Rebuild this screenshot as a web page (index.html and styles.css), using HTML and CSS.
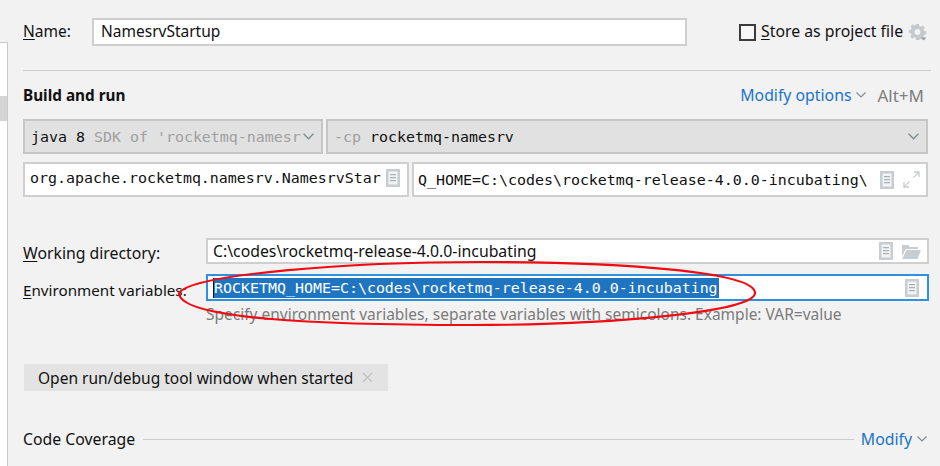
FILE: index.html
```html
<!DOCTYPE html>
<html lang="en-us">
  <head>
    <meta charset="utf-8">
    <title>Run Configuration</title>
    <link rel="stylesheet" href="styles.css">
  </head>
  <body>
    <svg class="defs" width="0" height="0">
      <symbol id="doc" viewBox="0 0 14 18">
        <path fill="#c8cdd1" d="M0 0h14v18H0z"/>
        <path fill="#f1f3f4" d="M2.500 2.500h9v13h-9z"/>
        <path fill="#a9b0b6" d="M4 5h6v1.200H4zM4 8h6v1.200H4zM4 11h6v1.200H4z"/>
      </symbol>
      <symbol id="chev" viewBox="0 0 10 6">
        <path fill="none" stroke="#7f8b91" stroke-width="1.200" d="M.5.5 5 5 9.500.5"/>
      </symbol>
    </svg>

    <!-- Config list on the left -->
    <div class="sidebar"><div class="sidebar-sel"></div></div>

    <div class="main">
      <!-- Name row -->
      <div class="name-row">
        <label class="name-label"><u>N</u>ame:</label>
        <div class="field name-field">NamesrvStartup</div>
        <span class="check"></span>
        <span class="store"><u>S</u>tore as project file</span>
        <svg class="gear" width="18" height="18" viewBox="0 0 18 18">
          <path fill="#c4c9cd" fill-rule="evenodd" d="M7 1h3l.4 2.200 1.500.6L13.800 2.500l2 2-1.300 1.900.6 1.500 2.200.4v3l-2.200.4-.6 1.500 1.300 1.900-2 2-1.900-1.300-1.500.6L10 17H7l-.4-2.100-1.500-.6-1.900 1.300-2-2 1.300-1.900-.6-1.500L0 10V7l2.200-.4.600-1.500L1.500 3.200l2-1.900 1.900 1.300 1.200-.5zM8.500 6a3 3 0 1 0 0 6 3 3 0 0 0 0-6z"/>
          <path fill="#9aa2a8" d="M12 14.500h5.500L14.750 17.500z"/>
        </svg>
      </div>
      <div class="sep"></div>

      <!-- Build and run -->
      <div class="section-head">
        <b>Build and run</b>
        <a class="link">Modify options</a>
        <svg class="chev-small" width="10" height="6"><use href="#chev"/></svg>
        <span class="shortcut">Alt+M</span>
      </div>
      <div class="mono-row">
        <div class="combo combo-sdk"><span class="clip">java 8 <i>SDK of 'rocketmq-namesr</i></span><svg width="11" height="7"><use href="#chev"/></svg></div>
        <div class="combo combo-cp"><span class="clip"><i>-cp</i> rocketmq-namesrv</span><svg width="11" height="7"><use href="#chev"/></svg></div>
      </div>
      <div class="mono-row row-fields">
        <div class="mono-field class-field">
          <span class="clip">org.apache.rocketmq.namesrv.NamesrvStar</span>
          <svg width="14" height="18"><use href="#doc"/></svg>
        </div>
        <div class="mono-field args-field">
          <span class="clip">Q_HOME=C:\codes\rocketmq-release-4.0.0-incubating\</span>
          <svg width="14" height="18"><use href="#doc"/></svg>
          <svg width="17" height="17" viewBox="0 0 17 17">
            <path fill="none" stroke="#c8cdd1" stroke-width="1.300" d="M10.500 6.500 15.500 1.500M11 1h5v5M6.500 10.500l-5 5M1 11v5h5"/>
          </svg>
        </div>
      </div>

      <!-- Working directory and environment -->
      <div class="form-row row-workdir">
        <label class="form-label"><u>W</u>orking directory:</label>
        <div class="field form-field">
          <span class="grow">C:\codes\rocketmq-release-4.0.0-incubating</span>
          <svg width="14" height="18"><use href="#doc"/></svg>
          <svg width="19" height="15" viewBox="0 0 19 15">
            <path fill="#c8cdd1" d="M0 1h6l2 2h8v2H4L0 12zM4.500 6H19l-3.500 9H0z"/>
          </svg>
        </div>
      </div>
      <div class="form-row row-env">
        <label class="form-label env-label"><u>E</u>nvironment variables:</label>
        <div class="field form-field env-field">
          <span class="grow mono"><span class="selected">ROCKETMQ_HOME=C:\codes\rocketmq-release-4.0.0-incubating</span></span>
          <svg width="14" height="18"><use href="#doc"/></svg>
        </div>
      </div>
      <div class="hint">Specify environment variables, separate variables with semicolons. Example: VAR=value</div>

      <!-- Option tag -->
      <div class="tag">
        <span>Open run/debug tool window when started</span>
        <svg width="11" height="11" viewBox="0 0 11 11">
          <path stroke="#bcc1c5" stroke-width="1.200" d="M1 1l9 9M10 1l-9 9"/>
        </svg>
      </div>

      <!-- Code coverage -->
      <div class="coverage">
        <span>Code Coverage</span>
        <div class="coverage-line"></div>
        <a class="link">Modify</a>
        <svg class="chev-small" width="10" height="6"><use href="#chev"/></svg>
      </div>
    </div>

    <!-- Hand drawn marker over the screenshot -->
    <svg class="marker" width="940" height="466" viewBox="0 0 940 466">
      <path fill="none" stroke="#f20a10" stroke-width="2.200" d="M179 293C192 274 350 262 480 262 625 262 755 272 755 293 755 312 610 325 470 325 320 325 179 319 179 293Z"/>
    </svg>
  </body>
</html>
```

FILE: styles.css
```css
* {
  box-sizing: border-box;
}

body {
  margin: 0;
  width: 940px;
  height: 466px;
  overflow: hidden;
  display: flex;
  position: relative;
  background-color: #f2f2f2;
  color: #111;
  font-family: "Noto Sans", sans-serif;
  font-size: 15.8px;
}

u {
  text-underline-offset: 2px;
}

.defs {
  position: absolute;
}

/* Left list, only its edge is visible */
.sidebar {
  flex: none;
  width: 8px;
  margin-top: 42px;
  padding-top: 53px;
  background-color: #fff;
  border-top: 1px solid #c9c9c9;
  border-right: 1px solid #c9c9c9;
}

.sidebar-sel {
  height: 25px;
  background-color: #d5d5d5;
}

.main {
  flex: 1;
  padding: 18px 9px 0 15px;
}

.field {
  display: flex;
  align-items: center;
  background-color: #fff;
  border: 2px solid #cfcfcf;
  padding: 0 5px;
  white-space: nowrap;
}

/* Name row */
.name-row {
  display: flex;
  align-items: center;
  height: 28px;
}

.name-label {
  width: 69px;
  padding-bottom: 2px;
  font-size: 15.5px;
}

.name-field {
  width: 595px;
  height: 28px;
  padding: 0 7px 2px;
  font-size: 15.5px;
}

.check {
  width: 17px;
  height: 17px;
  margin-left: 52px;
  border: 2px solid #3c3c3c;
  background-color: #f7f7f7;
}

.store {
  margin-left: 5px;
  width: 148px;
  padding-bottom: 2px;
  white-space: nowrap;
}

.gear {
  display: block;
}

.sep {
  height: 1px;
  margin-top: 24px;
  background-color: #cdcdcd;
}

/* Build and run */
.section-head {
  display: flex;
  align-items: center;
  height: 22px;
  margin-top: 13px;
}

.section-head b {
  flex: 1;
  font-size: 15.3px;
}

.link {
  color: #1a73cc;
}

.chev-small {
  margin-left: 5px;
}

.shortcut {
  margin-left: 11px;
  margin-right: 7px;
  font-size: 17px;
  color: #7d7d7d;
}

/* Monospace rows */
.mono-row {
  display: flex;
  gap: 3px;
  height: 35px;
  margin-top: 13px;
  margin-right: 3px;
  font-family: "DejaVu Sans Mono", monospace;
  font-size: 14.95px;
}

.row-fields {
  margin-top: 8px;
}

.clip {
  flex: 1;
  overflow: hidden;
  white-space: nowrap;
}

.clip i {
  font-style: normal;
  color: #a0a0a0;
}

.combo {
  display: flex;
  align-items: center;
  background-color: #e1e1e1;
  border: 2px solid #c6c6c6;
  padding: 0 7px 0 6px;
}

.combo-sdk {
  width: 300px;
}

.combo-cp {
  flex: 1;
}

.mono-field {
  display: flex;
  align-items: center;
  gap: 9px;
  background-color: #fff;
  border: 2px solid #cfcfcf;
  padding: 0 6px 0 4px;
}

.class-field {
  width: 386px;
  gap: 4px;
  padding: 0 7px 3px 5px;
}

.args-field {
  flex: 1;
}

/* Working directory and environment */
.form-row {
  display: flex;
  align-items: center;
  margin-right: 2px;
}

.row-workdir {
  height: 26px;
  margin-top: 41px;
}

.row-env {
  height: 27px;
  margin-top: 10px;
}

.form-label {
  flex: none;
  width: 183px;
  padding-top: 3px;
}

.env-label {
  padding-top: 4px;
  font-size: 15.2px;
}

.form-field {
  flex: 1;
  height: 100%;
  gap: 9px;
  padding-right: 6px;
}

.grow {
  flex: 1;
}

.env-field {
  border: 2px solid #2f8fe0;
  padding-right: 8px;
}

.mono {
  font-family: "DejaVu Sans Mono", monospace;
  font-size: 14.95px;
}

.selected {
  display: inline-block;
  padding: 1px 1px 0 0;
  line-height: 19px;
  color: #fff;
  background-color: #2075c0;
  border-left: 1px solid #111;
}

.hint {
  height: 24px;
  padding-top: 1px;
  line-height: 24px;
  margin-left: 183px;
  font-size: 15.5px;
  color: #7b7b7b;
}

/* Option tag */
.tag {
  display: flex;
  align-items: center;
  gap: 9px;
  width: 364px;
  height: 27px;
  margin-top: 39px;
  margin-left: 1px;
  padding-left: 14px;
  font-size: 15.5px;
  background-color: #e3e3e3;
}

/* Code coverage */
.coverage {
  display: flex;
  align-items: center;
  height: 22px;
  margin-top: 37px;
  margin-right: 4px;
}

.coverage-line {
  flex: 1;
  height: 1px;
  margin: 0 7px 0 8px;
  background-color: #cdcdcd;
}

/* Red ellipse drawn on top of the dialog */
.marker {
  position: absolute;
  top: 0;
  left: 0;
  pointer-events: none;
}
```
